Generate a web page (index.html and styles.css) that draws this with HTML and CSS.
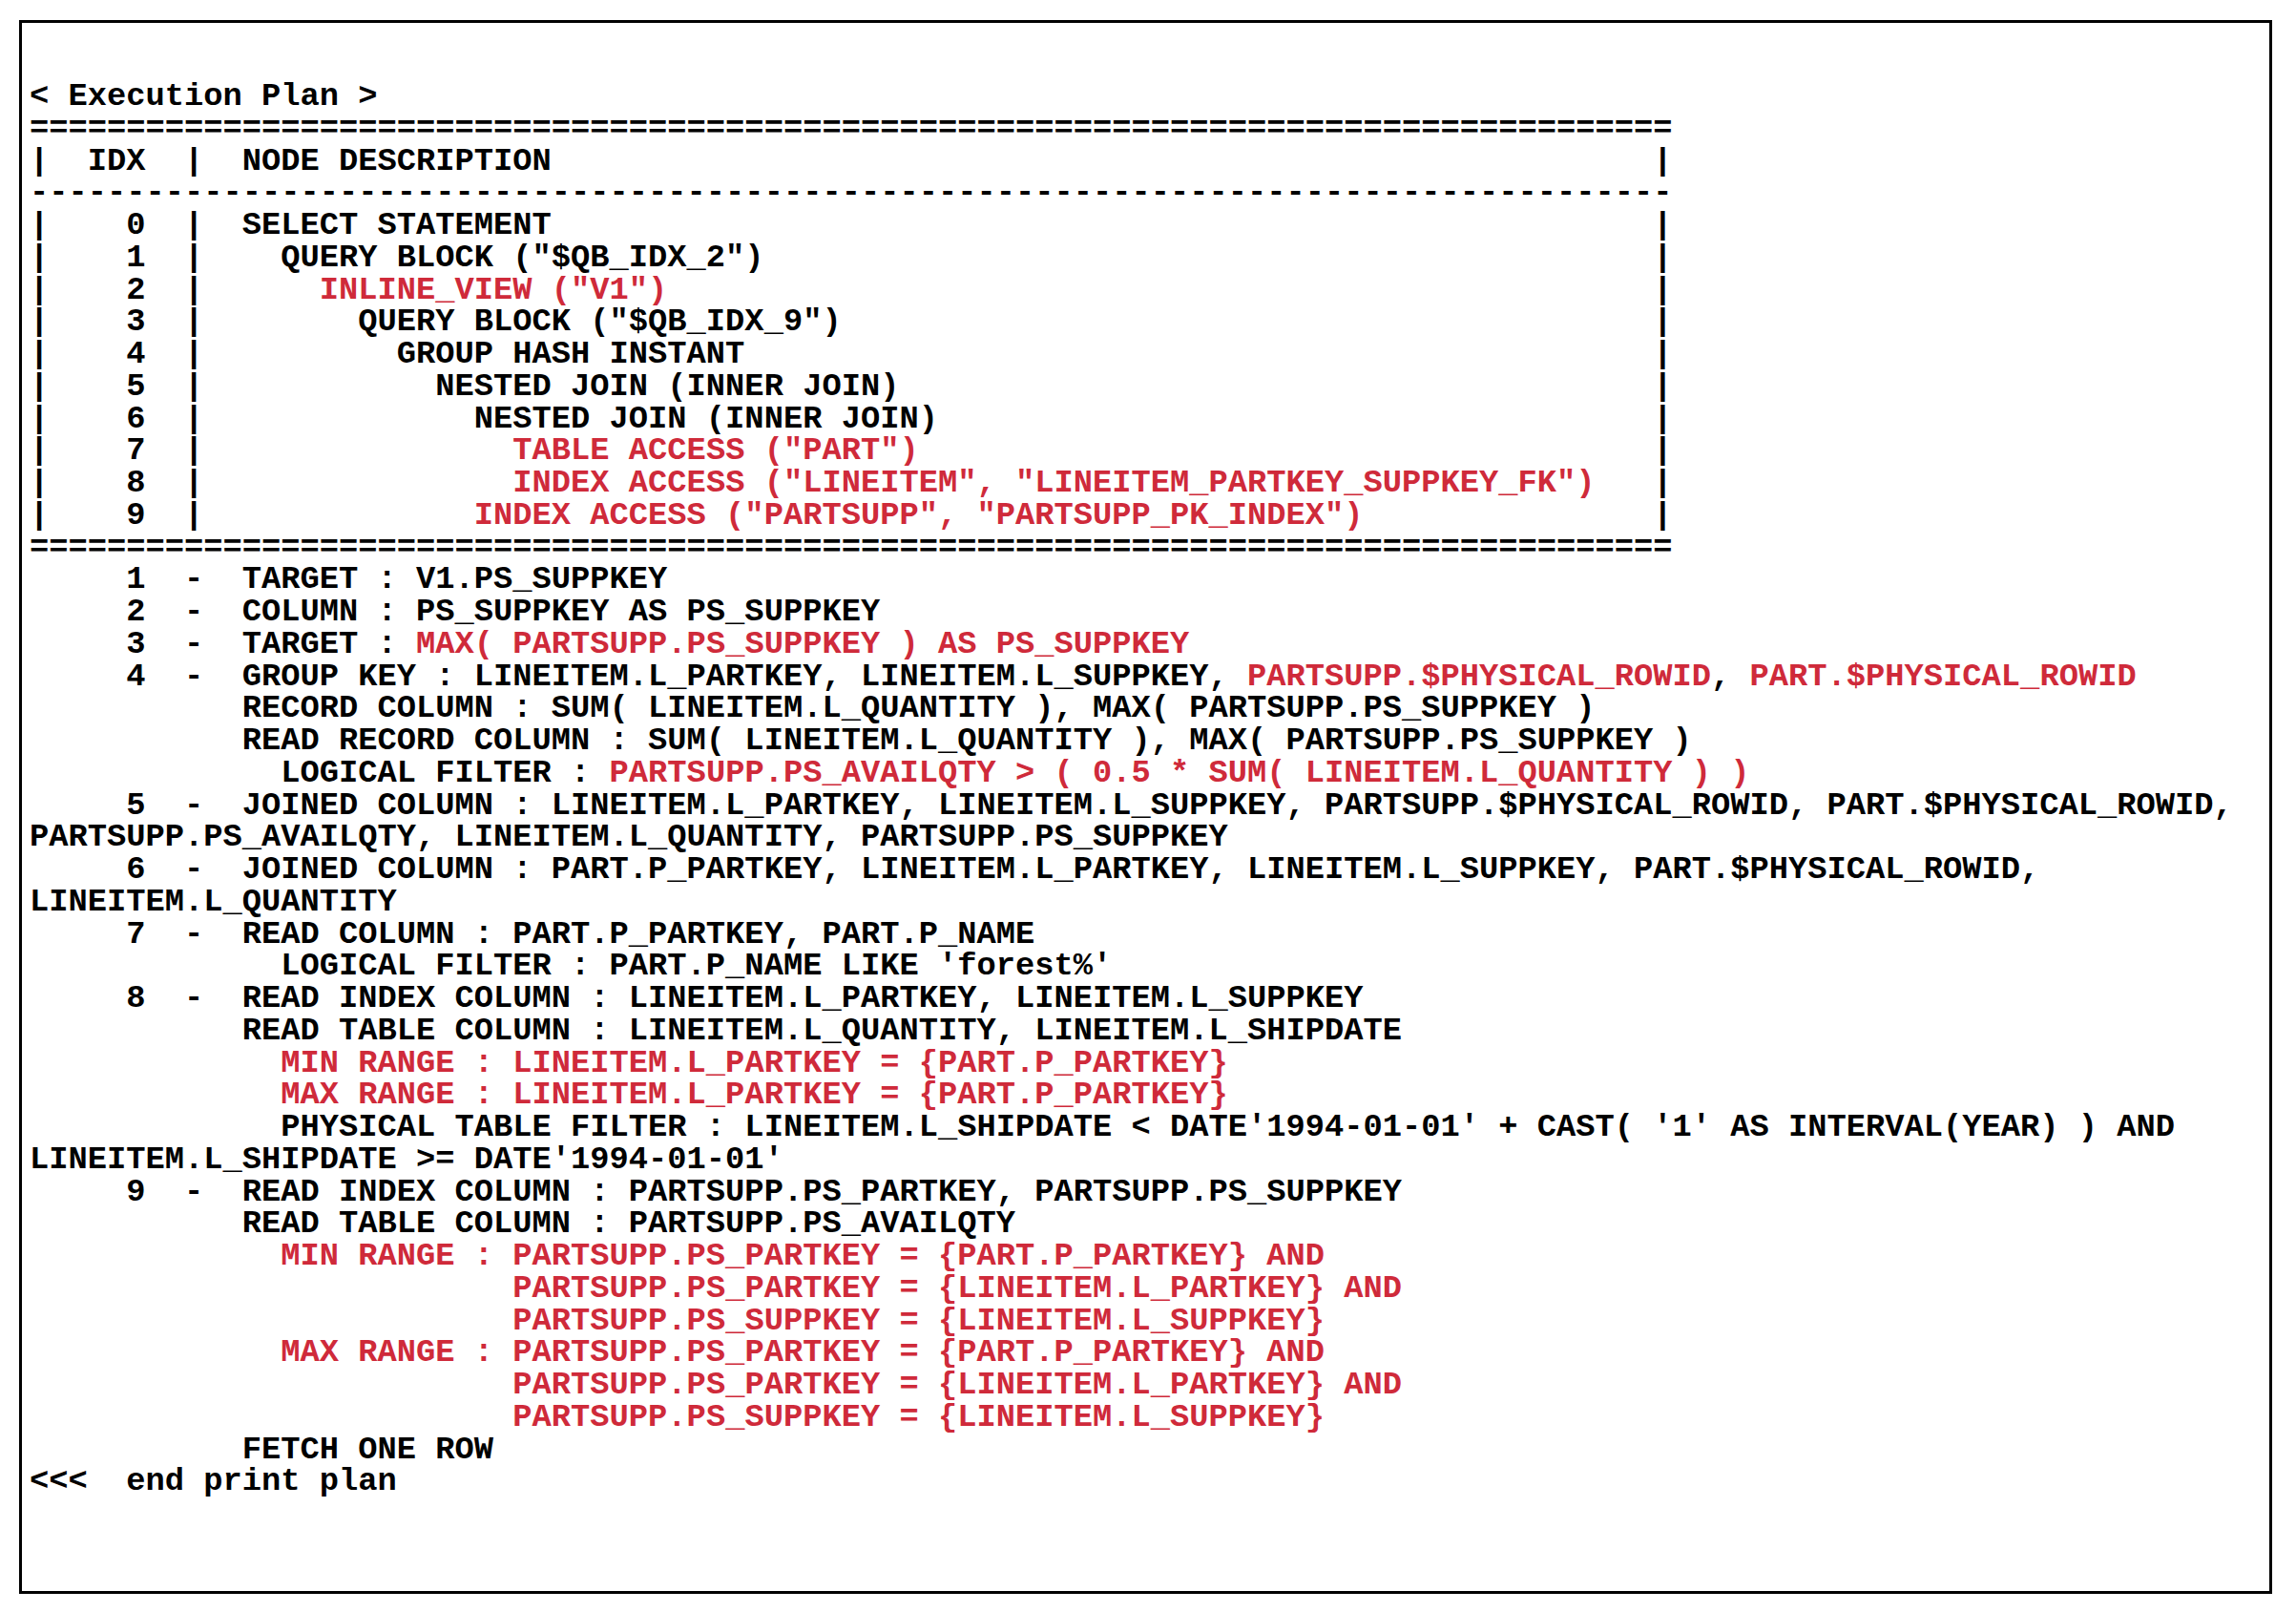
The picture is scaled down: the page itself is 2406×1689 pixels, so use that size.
FILE: index.html
```html
<!DOCTYPE html>
<html>
<head>
<meta charset="utf-8">
<title>Execution Plan</title>
<link rel="stylesheet" href="styles.css">
</head>
<body>
<div class="frame">
<pre class="plan">&lt; Execution Plan &gt;
=====================================================================================
<span class="cell">|  IDX  |  NODE DESCRIPTION</span>|
-------------------------------------------------------------------------------------
<span class="cell">|    0  |  SELECT STATEMENT</span>|
<span class="cell">|    1  |    QUERY BLOCK ("$QB_IDX_2")</span>|
<span class="cell">|    2  |      <span class="r">INLINE_VIEW ("V1")</span></span>|
<span class="cell">|    3  |        QUERY BLOCK ("$QB_IDX_9")</span>|
<span class="cell">|    4  |          GROUP HASH INSTANT</span>|
<span class="cell">|    5  |            NESTED JOIN (INNER JOIN)</span>|
<span class="cell">|    6  |              NESTED JOIN (INNER JOIN)</span>|
<span class="cell">|    7  |                <span class="r">TABLE ACCESS ("PART")</span></span>|
<span class="cell">|    8  |                <span class="r">INDEX ACCESS ("LINEITEM", "LINEITEM_PARTKEY_SUPPKEY_FK")</span></span>|
<span class="cell">|    9  |              <span class="r">INDEX ACCESS ("PARTSUPP", "PARTSUPP_PK_INDEX")</span></span>|
=====================================================================================
     1  -  TARGET : V1.PS_SUPPKEY
     2  -  COLUMN : PS_SUPPKEY AS PS_SUPPKEY
     3  -  TARGET : <span class="r">MAX( PARTSUPP.PS_SUPPKEY ) AS PS_SUPPKEY</span>
     4  -  GROUP KEY : LINEITEM.L_PARTKEY, LINEITEM.L_SUPPKEY, <span class="r">PARTSUPP.$PHYSICAL_ROWID</span>, <span class="r">PART.$PHYSICAL_ROWID</span>
           RECORD COLUMN : SUM( LINEITEM.L_QUANTITY ), MAX( PARTSUPP.PS_SUPPKEY )
           READ RECORD COLUMN : SUM( LINEITEM.L_QUANTITY ), MAX( PARTSUPP.PS_SUPPKEY )
             LOGICAL FILTER : <span class="r">PARTSUPP.PS_AVAILQTY &gt; ( 0.5 * SUM( LINEITEM.L_QUANTITY ) )</span>
     5  -  JOINED COLUMN : LINEITEM.L_PARTKEY, LINEITEM.L_SUPPKEY, PARTSUPP.$PHYSICAL_ROWID, PART.$PHYSICAL_ROWID,
PARTSUPP.PS_AVAILQTY, LINEITEM.L_QUANTITY, PARTSUPP.PS_SUPPKEY
     6  -  JOINED COLUMN : PART.P_PARTKEY, LINEITEM.L_PARTKEY, LINEITEM.L_SUPPKEY, PART.$PHYSICAL_ROWID,
LINEITEM.L_QUANTITY
     7  -  READ COLUMN : PART.P_PARTKEY, PART.P_NAME
             LOGICAL FILTER : PART.P_NAME LIKE 'forest%'
     8  -  READ INDEX COLUMN : LINEITEM.L_PARTKEY, LINEITEM.L_SUPPKEY
           READ TABLE COLUMN : LINEITEM.L_QUANTITY, LINEITEM.L_SHIPDATE
             <span class="r">MIN RANGE : LINEITEM.L_PARTKEY = {PART.P_PARTKEY}</span>
             <span class="r">MAX RANGE : LINEITEM.L_PARTKEY = {PART.P_PARTKEY}</span>
             PHYSICAL TABLE FILTER : LINEITEM.L_SHIPDATE &lt; DATE'1994-01-01' + CAST( '1' AS INTERVAL(YEAR) ) AND
LINEITEM.L_SHIPDATE &gt;= DATE'1994-01-01'
     9  -  READ INDEX COLUMN : PARTSUPP.PS_PARTKEY, PARTSUPP.PS_SUPPKEY
           READ TABLE COLUMN : PARTSUPP.PS_AVAILQTY
             <span class="r">MIN RANGE : PARTSUPP.PS_PARTKEY = {PART.P_PARTKEY} AND</span>
                         <span class="r">PARTSUPP.PS_PARTKEY = {LINEITEM.L_PARTKEY} AND</span>
                         <span class="r">PARTSUPP.PS_SUPPKEY = {LINEITEM.L_SUPPKEY}</span>
             <span class="r">MAX RANGE : PARTSUPP.PS_PARTKEY = {PART.P_PARTKEY} AND</span>
                         <span class="r">PARTSUPP.PS_PARTKEY = {LINEITEM.L_PARTKEY} AND</span>
                         <span class="r">PARTSUPP.PS_SUPPKEY = {LINEITEM.L_SUPPKEY}</span>
           FETCH ONE ROW
&lt;&lt;&lt;  end print plan</pre>
</div>
</body>
</html>
```
FILE: styles.css
```css
html, body {
  margin: 0;
  padding: 0;
  background: #ffffff;
}

.frame {
  margin: 21px 0 0 20px;
  width: 2361px;
  height: 1649px;
  box-sizing: border-box;
  border: 3px solid #000000;
  padding: 61px 0 0 8px;
}

.plan {
  margin: 0;
  font-family: "Liberation Mono", "Courier New", monospace;
  font-weight: bold;
  font-size: 33.75px;
  line-height: 33.75px;
  color: #000000;
  white-space: pre;
}

.r {
  color: #cf2a3a;
}

.cell {
  display: inline-block;
  width: 84ch;
}
```
